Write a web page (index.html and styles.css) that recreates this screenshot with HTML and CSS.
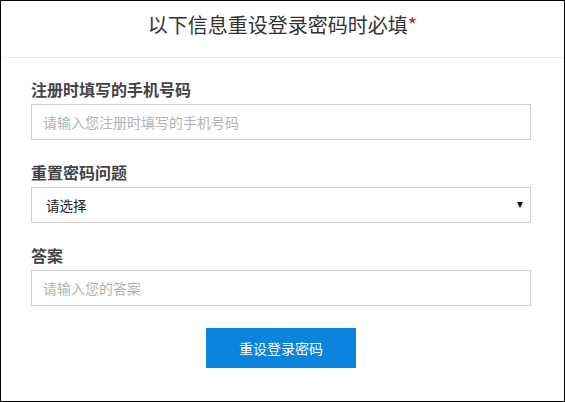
FILE: index.html
```html
<!DOCTYPE html>
<html lang="zh-CN">
<head>
<meta charset="utf-8">
<title>重设登录密码</title>
<link rel="stylesheet" href="styles.css">
</head>
<body>
<div class="panel">
  <div class="panel-head">
    <h1 class="title">以下信息重设登录密码时必填<span class="req">*</span></h1>
  </div>
  <form class="form">
    <div class="field">
      <label class="label" for="phone">注册时填写的手机号码</label>
      <input class="control" id="phone" type="text" placeholder="请输入您注册时填写的手机号码">
    </div>
    <div class="field">
      <label class="label" for="question">重置密码问题</label>
      <div class="select-wrap">
        <select class="control select" id="question">
          <option>请选择</option>
        </select>
        <span class="caret"></span>
      </div>
    </div>
    <div class="field">
      <label class="label" for="answer">答案</label>
      <input class="control" id="answer" type="text" placeholder="请输入您的答案">
    </div>
    <div class="actions">
      <button class="btn" type="button">重设登录密码</button>
    </div>
  </form>
</div>
</body>
</html>
```

FILE: styles.css
```css
* { box-sizing: border-box; }
html, body {
  margin: 0;
  padding: 0;
  background: #fff;
}
body {
  font-family: "Noto Sans CJK SC", "Noto Sans", sans-serif;
}
.panel {
  width: 565px;
  height: 402px;
  border: 1px solid #000;
  background: #fff;
}
.panel-head {
  padding: 10px 0 18px;
  border-bottom: 1px solid #ececec;
  text-align: center;
}
.title {
  margin: 0;
  font-size: 20px;
  line-height: 28px;
  font-weight: normal;
  color: #333;
}
.req {
  color: #d9141b;
}
.form {
  margin: 0;
  padding: 20px 33px 0 30px;
}
.field {
  margin-bottom: 21px;
}
.label {
  display: block;
  margin-bottom: 4px;
  font-size: 16px;
  line-height: 22px;
  font-weight: bold;
  color: #444;
}
.control {
  display: block;
  width: 500px;
  height: 36px;
  margin: 0;
  padding: 0 11px;
  border: 1px solid #cfcfcf;
  border-radius: 0;
  background: #fff;
  font-family: inherit;
  font-size: 14px;
  color: #333;
  outline: none;
}
.control::placeholder {
  color: #b3b3b3;
}
.select-wrap {
  position: relative;
  width: 500px;
}
.select {
  -webkit-appearance: none;
  appearance: none;
  padding-left: 14px;
  font-size: 13.5px;
  color: #222;
}
.caret {
  position: absolute;
  right: 8px;
  top: 15px;
  width: 0;
  height: 0;
  border-left: 3.5px solid transparent;
  border-right: 3.5px solid transparent;
  border-top: 6px solid #111;
  pointer-events: none;
}
.actions {
  display: flex;
  justify-content: center;
  padding-top: 1px;
}
.btn {
  width: 150px;
  height: 40px;
  border: 0;
  border-radius: 0;
  background: #0a84dc;
  color: #fff;
  font-family: inherit;
  font-size: 14px;
  cursor: pointer;
}
```
